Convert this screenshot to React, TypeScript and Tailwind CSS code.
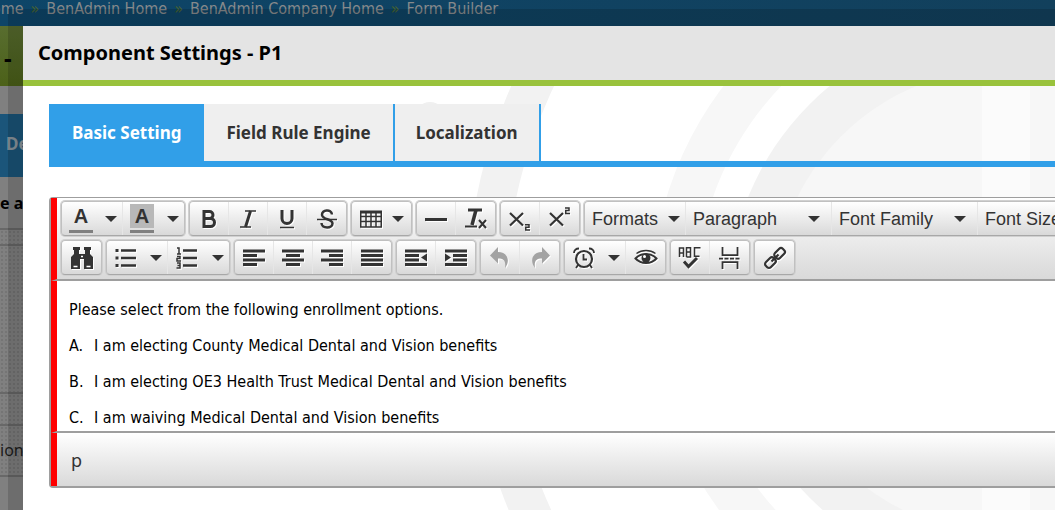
import React from 'react';

type IconProps = { children: React.ReactNode; faded?: boolean };

const Icon = ({ children, faded }: IconProps) => (
  <svg
    viewBox="0 0 24 24"
    aria-hidden="true"
    className={
      faded
        ? 'h-6 w-6 shrink-0 text-[#a3a3a3] drop-shadow-[1px_1px_0_white]'
        : 'h-6 w-6 shrink-0 text-[#333333] drop-shadow-[1px_1px_0_white]'
    }
    fill="none"
    stroke="currentColor"
    strokeWidth="2"
  >
    {children}
  </svg>
);

const Caret = () => (
  <svg viewBox="0 0 12 6" aria-hidden="true" className="h-1.5 w-3 shrink-0 fill-[#333333]">
    <path d="M0 0h12L6 6z" />
  </svg>
);

const Group = ({ children }: { children: React.ReactNode }) => (
  <div className="flex h-[35px] shrink-0 divide-x divide-[#e6e6e6] rounded border border-[#c0c0c0] border-b-[#a8a8a8] bg-linear-to-b from-white to-[#d9d9d9] shadow-[0_0_0_1px_#d0d0d0]">
    {children}
  </div>
);

const Tool = ({ label, children }: { label: string; children: React.ReactNode }) => (
  <button type="button" aria-label={label} className="flex w-[39px] shrink-0 items-center justify-center">
    {children}
  </button>
);

const SplitTool = ({ label, children }: { label: string; children: React.ReactNode }) => (
  <button type="button" aria-label={label} className="flex w-[61px] shrink-0 items-center justify-between pr-[5px] pl-[7px]">
    {children}
    <Caret />
  </button>
);

const ListTool = ({ label, wide }: { label: string; wide?: boolean }) => (
  <button
    type="button"
    className={
      wide
        ? 'flex w-[146px] shrink-0 items-center justify-between pr-[11px] pl-[7px]'
        : 'flex w-[101px] shrink-0 items-center justify-between pr-[5px] pl-[7px]'
    }
  >
    <span className="whitespace-nowrap">{label}</span>
    <Caret />
  </button>
);

const ColorLetter = ({ filled }: { filled?: boolean }) => (
  <span className="flex flex-col items-center font-['Liberation_Sans',Arial,sans-serif]">
    <span
      className={
        filled
          ? 'flex h-6 w-6 items-center justify-center bg-[#b8b8b8] text-xl font-bold text-[#333333]'
          : 'flex h-6 w-6 items-center justify-center text-xl font-bold text-[#333333]'
      }
    >
      A
    </span>
    <span className="mt-0.5 h-[3px] w-6 bg-[#808080]" />
  </span>
);

const Watermark = () => (
  <svg
    className="pointer-events-none absolute top-0 left-0"
    width="1200"
    height="560"
    viewBox="23 26 1200 560"
    aria-hidden="true"
  >
    <circle cx="1006" cy="301" r="520" fill="none" stroke="#f2f2f2" strokeWidth="39" />
    <circle cx="1006" cy="301" r="333" fill="none" stroke="#f7f7f7" strokeWidth="44" />
    <circle cx="1006" cy="301" r="278" fill="#f2f2f2" />
    <circle cx="1006" cy="301" r="233" fill="#f7f7f7" />
    <rect x="982" y="26" width="48" height="560" fill="#fbfbfb" />
    <circle cx="430" cy="118" r="16" fill="#f0f0f0" />
  </svg>
);

const crumbs = ['BenAdmin Home', 'BenAdmin Company Home', 'Form Builder'];

const PageBehind = () => (
  <div className="flex min-h-screen flex-col bg-[#808080]">
    <nav className="flex h-[26px] items-start bg-linear-to-r from-[#0d4568] to-[#12405c] font-['DejaVu_Sans_Condensed','DejaVu_Sans',sans-serif] text-base leading-[18px] text-[#86898b]">
      <div className="-ml-[19px] flex gap-[7px] whitespace-nowrap">
        <a href="#home">Home</a>
        {crumbs.map((crumb) => (
          <React.Fragment key={crumb}>
            <span className="text-[#46622f]">»</span>
            <a href="#crumb">{crumb}</a>
          </React.Fragment>
        ))}
      </div>
    </nav>
    <div className="h-[60px] bg-linear-to-b from-[#586d2f] to-[#4c6118] pt-4 pl-1 text-2xl font-bold text-black">-</div>
    <div className="mt-7 flex h-[63px] items-center bg-[#1b557a] pb-1 pl-1.5 text-[17px] font-bold text-[#8c979e]">
      Design
    </div>
    <div className="flex h-[51px] items-center text-base font-bold text-black">e at</div>
    <div className="h-[249px] border-y-2 border-[#686868] bg-[radial-gradient(#757575_1px,transparent_1px)] bg-size-[4px_4px]">
      <div className="h-4 border-b-2 border-[#686868]" />
      <div className="h-[148px] border-b-2 border-[#686868]" />
      <div className="h-8 border-b-2 border-[#686868]" />
      <div className="pt-3 text-base text-[#1c1c1c]">ion</div>
    </div>
  </div>
);

const Toolbar = () => (
  <div className="flex flex-col gap-1 overflow-hidden border-b-2 border-l-[6px] border-b-[#9e9e9e] border-l-[#ff0000] bg-linear-to-b from-white to-[#d9d9d9] pt-[3px] pb-1 pl-1">
    <div className="flex gap-1">
      <Group>
        <SplitTool label="Text color"><ColorLetter /></SplitTool>
        <SplitTool label="Background color"><ColorLetter filled /></SplitTool>
      </Group>
      <Group>
        <Tool label="Bold">
          <Icon>
            <path d="M7 4.500h5.500a3.500 3.500 0 0 1 0 7H7zM7 11.500h6.500a4 4 0 0 1 0 8H7z" strokeWidth="3" />
          </Icon>
        </Tool>
        <Tool label="Italic">
          <Icon>
            <path d="M9 4h11M4 20h11" strokeWidth="1.500" />
            <path d="M14.500 4l-5 16" strokeWidth="3" />
          </Icon>
        </Tool>
        <Tool label="Underline">
          <Icon>
            <path d="M7 3v8.500a5 5 0 0 0 10 0V3" strokeWidth="3" />
            <path d="M5 20.500h14" strokeWidth="1.500" />
          </Icon>
        </Tool>
        <Tool label="Strikethrough">
          <Icon>
            <path d="M17 7.500C16.500 1.500 6.500 2.500 7 8c.5 5 10.500 3.500 10.500 8.500 0 5-10.500 5.500-11-.5" strokeWidth="2.500" />
            <path d="M2 12.500h20" strokeWidth="1.500" />
          </Icon>
        </Tool>
      </Group>
      <Group>
        <button type="button" aria-label="Table" className="flex w-[59px] shrink-0 items-center justify-between px-[7px]">
          <Icon>
            <path d="M1 5h22" strokeWidth="3" />
            <path d="M1.750 4v16h20.500V4M1 9.500h22M1 14.500h22M1 20h22M7 5v15M12 5v15M17 5v15" strokeWidth="1.500" />
          </Icon>
          <Caret />
        </button>
      </Group>
      <Group>
        <Tool label="Horizontal line">
          <Icon><path d="M1 12.500h22" strokeWidth="3" /></Icon>
        </Tool>
        <Tool label="Clear formatting">
          <Icon>
            <path d="M4 3h14" strokeWidth="3" />
            <path d="M12 3L8 18" strokeWidth="3.500" />
            <path d="M1 19.500h12" strokeWidth="2" />
            <path d="M15 13l7 8M22 13l-7 8" strokeWidth="2" />
          </Icon>
        </Tool>
      </Group>
      <Group>
        <Tool label="Subscript">
          <Icon>
            <path d="M2 6l13 12.500M15 6L2 18.500" strokeWidth="2.200" />
            <path d="M17 17.750h4v2.500h-3.250V23H22" strokeWidth="1.500" />
          </Icon>
        </Tool>
        <Tool label="Superscript">
          <Icon>
            <path d="M2 6l13 12.500M15 6L2 18.500" strokeWidth="2.200" />
            <path d="M17 1h4v2.500h-3.250v3H22" strokeWidth="1.500" />
          </Icon>
        </Tool>
      </Group>
      <div className="flex font-['Liberation_Sans',Arial,sans-serif] text-lg text-[#333333]">
        <Group>
          <ListTool label="Formats" />
          <ListTool label="Paragraph" wide />
          <ListTool label="Font Family" wide />
          <ListTool label="Font Sizes" wide />
        </Group>
      </div>
    </div>
    <div className="flex gap-1">
      <Group>
        <Tool label="Find and replace">
          <Icon>
            <path
              d="M3 1h7v3H9v4h6V4h-1V1h7v3h-1v4l3 3v12h-9V13h-4v10H1V11l3-3V4H3z"
              fill="currentColor"
              stroke="none"
            />
            <path d="M3.500 20.500h4M16.500 20.500h4M11 10.500h2" stroke="white" strokeWidth="1.500" />
          </Icon>
        </Tool>
      </Group>
      <Group>
        <SplitTool label="Bullet list">
          <Icon>
            <path d="M7 4.500h15M7 12h15M7 19.500h15" strokeWidth="2.500" />
            <path d="M1.500 4.500h3M1.500 12h3M1.500 19.500h3" strokeWidth="3" />
          </Icon>
        </SplitTool>
        <SplitTool label="Numbered list">
          <Icon>
            <path d="M8 4.500h14M8 12h14M8 19.500h14" strokeWidth="2.500" />
            <path d="M2 2h2v6M2 8h4M2 10.500h3v2H2v2.500h4M2 17h3v5H1.500M2.500 19.500H5" strokeWidth="1.500" />
          </Icon>
        </SplitTool>
      </Group>
      <Group>
        <Tool label="Align left">
          <Icon><path d="M1 5h22M1 9.500h14M1 14h22M1 18.500h14" strokeWidth="3" /></Icon>
        </Tool>
        <Tool label="Align center">
          <Icon><path d="M1 5h22M5 9.500h14M1 14h22M5 18.500h14" strokeWidth="3" /></Icon>
        </Tool>
        <Tool label="Align right">
          <Icon><path d="M1 5h22M9 9.500h14M1 14h22M9 18.500h14" strokeWidth="3" /></Icon>
        </Tool>
        <Tool label="Justify">
          <Icon><path d="M1 5h22M1 9.500h22M1 14h22M1 18.500h22" strokeWidth="3" /></Icon>
        </Tool>
      </Group>
      <Group>
        <Tool label="Decrease indent">
          <Icon>
            <path d="M1 5h22M1 9.500h14M1 14h14M1 18.500h22" strokeWidth="3" />
            <path d="M23 7.500v8L17 11.500z" fill="currentColor" stroke="none" />
          </Icon>
        </Tool>
        <Tool label="Increase indent">
          <Icon>
            <path d="M1 5h22M9 9.500h14M9 14h14M1 18.500h22" strokeWidth="3" />
            <path d="M1 7.500v8L7 11.500z" fill="currentColor" stroke="none" />
          </Icon>
        </Tool>
      </Group>
      <Group>
        <Tool label="Undo">
          <Icon faded>
            <path d="M10 1v5c9 0 13 8 7 16 1-7-1-9.500-7-9.500v5L2 9.500z" fill="currentColor" stroke="none" />
          </Icon>
        </Tool>
        <Tool label="Redo">
          <Icon faded>
            <path d="M14 1v5C5 6 1 14 7 22c-1-7 1-9.500 7-9.500v5l8-8z" fill="currentColor" stroke="none" />
          </Icon>
        </Tool>
      </Group>
      <Group>
        <SplitTool label="Insert date/time">
          <Icon>
            <circle cx="12" cy="13" r="8" strokeWidth="2.200" />
            <path d="M11.500 8v5.500H15M2 7c0-3 2-4.500 5-4.500M22 7c0-3-2-4.500-5-4.500M6 19l-2 3M18 19l2 3" strokeWidth="1.800" />
          </Icon>
        </SplitTool>
        <Tool label="Preview">
          <Icon>
            <path d="M1.500 12.500C7 6.500 17 6.500 22.500 12.500 17 18.500 7 18.500 1.500 12.500z" />
            <path d="M2.500 7.500C8 3.500 16 3.500 21.500 7.500" strokeWidth="1.500" />
            <circle cx="12" cy="12" r="4.500" fill="currentColor" stroke="none" />
            <circle cx="10.500" cy="10.500" r="1.500" fill="white" stroke="none" />
          </Icon>
        </Tool>
      </Group>
      <Group>
        <Tool label="Spellcheck">
          <Icon>
            <path d="M1.500 11V2h4v9M1.500 7h4M8.500 1v10M8.500 1.750h4v9.250h-4M8.500 6h4M22.500 1.750h-6v8.500h5" strokeWidth="1.500" />
            <path d="M6 15.500l4.500 5L19 12" strokeWidth="3" />
          </Icon>
        </Tool>
        <Tool label="Page break">
          <Icon>
            <path d="M4.500 1v8h15V1M4.500 23v-7h15v7" strokeWidth="1.750" />
            <path d="M1 12.500h22" strokeDasharray="4 1.500" strokeWidth="1.750" />
          </Icon>
        </Tool>
      </Group>
      <Group>
        <Tool label="Insert link">
          <Icon>
            <g transform="rotate(-45 12 12)" strokeWidth="2.200">
              <rect x="0" y="8.500" width="11" height="7" rx="2.500" />
              <rect x="13" y="8.500" width="11" height="7" rx="2.500" />
              <path d="M7 12h10" />
            </g>
          </Icon>
        </Tool>
      </Group>
    </div>
  </div>
);

const options = [
  { letter: 'A.', text: 'I am electing County Medical Dental and Vision benefits' },
  { letter: 'B.', text: 'I am electing OE3 Health Trust Medical Dental and Vision benefits' },
  { letter: 'C.', text: 'I am waiving Medical Dental and Vision benefits' },
];

const Editor = () => (
  <div className="relative mt-[30px] ml-[26px] rounded-l-sm border-t border-b-2 border-l-2 border-[#9e9e9e] bg-white">
    <Toolbar />
    <div className="flex flex-col gap-3 overflow-hidden border-b-2 border-l-[6px] border-b-[#9e9e9e] border-l-[#ff0000] pt-[17px] pb-px pl-3 font-['DejaVu_Sans_Condensed','DejaVu_Sans',sans-serif] text-base leading-6 text-black">
      <p>Please select from the following enrollment options.</p>
      {options.map((option) => (
        <p key={option.letter} className="flex">
          <span className="w-[25px] shrink-0">{option.letter}</span>
          <span>{option.text}</span>
        </p>
      ))}
    </div>
    <div className="flex h-[53px] items-center border-l-[6px] border-l-[#ff0000] bg-linear-to-b from-white to-[#d9d9d9] pl-3.5 text-lg text-[#333333]">
      p
    </div>
  </div>
);

const App = () => (
  <div className="relative min-h-screen overflow-hidden font-['Noto_Sans',Tahoma,sans-serif]">
    <PageBehind />
    <div
      role="dialog"
      aria-labelledby="dialog-title"
      className="absolute top-[9px] right-0 bottom-0 left-2 overflow-hidden border-t-[17px] border-l-[15px] border-black/15 bg-white bg-clip-padding"
    >
      <Watermark />
      <h2
        id="dialog-title"
        className="relative flex h-[60px] items-center border-b-[6px] border-[#99c23c] bg-[#e4e4e4] pl-[15px] text-xl font-bold text-black"
      >
        Component Settings - P1
      </h2>
      <div
        role="tablist"
        className="relative mt-[18px] ml-[26px] flex h-[63px] border-b-[6px] border-[#319fe8] text-[17px] font-bold text-[#333333]"
      >
        <button type="button" role="tab" aria-selected="true" className="bg-[#319fe8] px-[23px] text-white">
          Basic Setting
        </button>
        <button type="button" role="tab" aria-selected="false" className="border-r-2 border-[#319fe8] bg-[#efefef] px-[22px]">
          Field Rule Engine
        </button>
        <button type="button" role="tab" aria-selected="false" className="border-r-2 border-[#319fe8] bg-[#efefef] px-[21px]">
          Localization
        </button>
      </div>
      <Editor />
    </div>
  </div>
);

export default App;
